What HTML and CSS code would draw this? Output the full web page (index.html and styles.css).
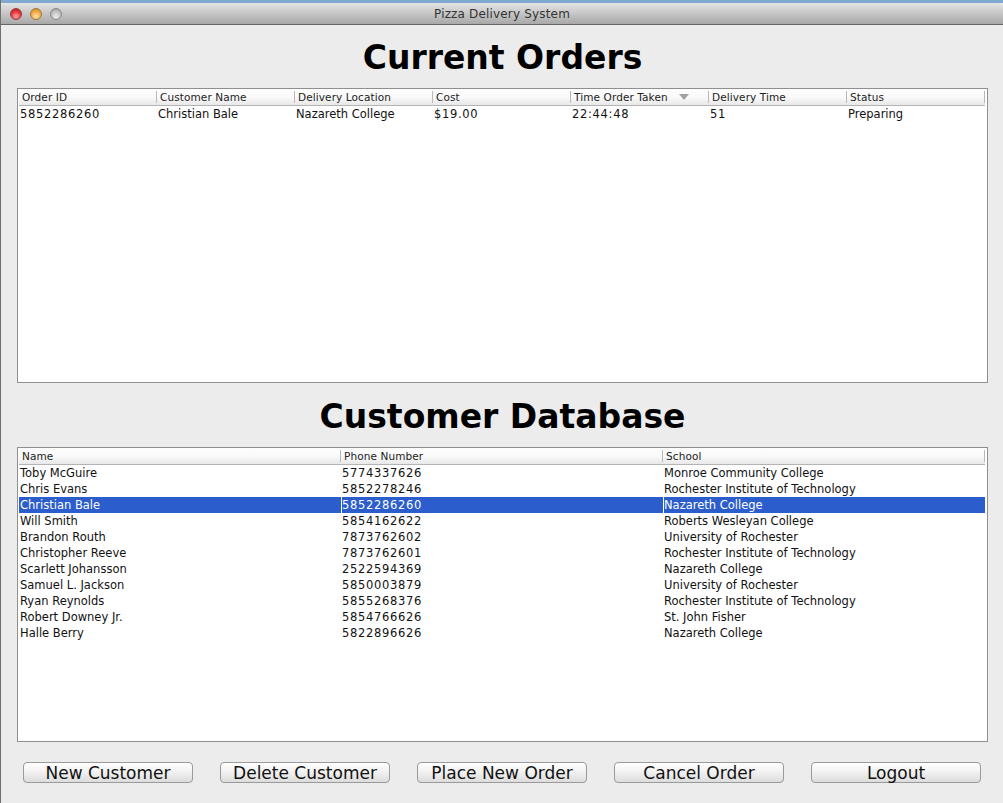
FILE: index.html
```html
<!DOCTYPE html>
<html lang="en">
<head>
<meta charset="utf-8">
<title>Pizza Delivery System</title>
<link rel="stylesheet" href="styles.css">
</head>
<body>
<div class="window">
  <header class="titlebar">
    <div class="lights">
      <span class="light red"></span>
      <span class="light amber"></span>
      <span class="light grey"></span>
    </div>
    <span class="title">Pizza Delivery System</span>
  </header>
  <main class="content">
    <h1 class="heading first">Current Orders</h1>
    <section class="table">
      <div class="row head cols7">
        <span class="hcell">Order ID</span>
        <span class="hcell">Customer Name</span>
        <span class="hcell">Delivery Location</span>
        <span class="hcell">Cost</span>
        <span class="hcell sorted">Time Order Taken<svg class="sort" width="10" height="6" viewBox="0 0 10 6"><path d="M0 0H10L5 6Z" fill="#a0a0a0"/></svg></span>
        <span class="hcell">Delivery Time</span>
        <span class="hcell">Status</span>
      </div>
      <div class="row cols7">
        <span class="cell num">5852286260</span>
        <span class="cell">Christian Bale</span>
        <span class="cell">Nazareth College</span>
        <span class="cell num">$19.00</span>
        <span class="cell num">22:44:48</span>
        <span class="cell num">51</span>
        <span class="cell">Preparing</span>
      </div>
    </section>
    <h1 class="heading second">Customer Database</h1>
    <section class="table">
      <div class="row head cols3">
        <span class="hcell">Name</span>
        <span class="hcell">Phone Number</span>
        <span class="hcell">School</span>
      </div>
      <div class="row cols3"><span class="cell">Toby McGuire</span><span class="cell num">5774337626</span><span class="cell">Monroe Community College</span></div>
      <div class="row cols3"><span class="cell">Chris Evans</span><span class="cell num">5852278246</span><span class="cell">Rochester Institute of Technology</span></div>
      <div class="row cols3 selected"><span class="cell">Christian Bale</span><span class="cell num">5852286260</span><span class="cell">Nazareth College</span></div>
      <div class="row cols3"><span class="cell">Will Smith</span><span class="cell num">5854162622</span><span class="cell">Roberts Wesleyan College</span></div>
      <div class="row cols3"><span class="cell">Brandon Routh</span><span class="cell num">7873762602</span><span class="cell">University of Rochester</span></div>
      <div class="row cols3"><span class="cell">Christopher Reeve</span><span class="cell num">7873762601</span><span class="cell">Rochester Institute of Technology</span></div>
      <div class="row cols3"><span class="cell">Scarlett Johansson</span><span class="cell num">2522594369</span><span class="cell">Nazareth College</span></div>
      <div class="row cols3"><span class="cell">Samuel L. Jackson</span><span class="cell num">5850003879</span><span class="cell">University of Rochester</span></div>
      <div class="row cols3"><span class="cell">Ryan Reynolds</span><span class="cell num">5855268376</span><span class="cell">Rochester Institute of Technology</span></div>
      <div class="row cols3"><span class="cell">Robert Downey Jr.</span><span class="cell num">5854766626</span><span class="cell">St. John Fisher</span></div>
      <div class="row cols3"><span class="cell">Halle Berry</span><span class="cell num">5822896626</span><span class="cell">Nazareth College</span></div>
    </section>
    <div class="buttons">
      <button class="btn">New Customer</button>
      <button class="btn">Delete Customer</button>
      <button class="btn">Place New Order</button>
      <button class="btn">Cancel Order</button>
      <button class="btn">Logout</button>
    </div>
  </main>
</div>
</body>
</html>
```
FILE: styles.css
```css
* { box-sizing: border-box; }
html, body { margin: 0; height: 100%; }
body {
  width: 1003px;
  height: 803px;
  overflow: hidden;
  background: #6f6f6f;
  padding: 3px 0 0 1px;
  font-family: "DejaVu Sans", sans-serif;
}
.window {
  height: 800px;
  background: #ececec;
  display: flex;
  flex-direction: column;
  box-shadow: 0 -3px 0 #7fa9cf;
}
.titlebar {
  height: 22px;
  flex: none;
  display: flex;
  align-items: center;
  justify-content: center;
  position: relative;
  background: linear-gradient(#e4e4e4, #a8a8a8);
  border-bottom: 1px solid #666;
  border-radius: 4px 4px 0 0;
}
.lights {
  position: absolute;
  left: 9px;
  top: 5px;
  display: flex;
  gap: 8px;
}
.light {
  width: 12px;
  height: 12px;
  border-radius: 50%;
  border: 1px solid #777;
}
.red { background: radial-gradient(circle at 50% 75%, #ffa0a0, #e0303a 60%, #b02228); border-color: #9a3a3a; }
.amber { background: radial-gradient(circle at 50% 75%, #ffe2a8, #eea540 60%, #c08428); border-color: #a0783a; }
.grey { background: radial-gradient(circle at 50% 75%, #ececec, #bcbcbc 60%, #989898); border-color: #8a8a8a; }
.title {
  font-size: 12px;
  letter-spacing: 0.17px;
  color: #333;
}
.content {
  flex: 1;
  padding: 0 15px 0 16px;
  display: flex;
  flex-direction: column;
}
.heading {
  margin: 0;
  text-align: center;
  font-size: 33px;
  font-weight: 700;
  color: #000;
}
.first { height: 63px; line-height: 66px; }
.second { height: 64px; line-height: 67px; }
.table {
  height: 295px;
  flex: none;
  background: #fff;
  border: 1px solid #8f8f8f;
  padding: 0 2px 0 1px;
}
.row {
  display: grid;
  height: 16px;
  align-items: center;
}
.cols7 { grid-template-columns: repeat(7, 138px); }
.cols3 { grid-template-columns: repeat(3, 322px); }
.head {
  height: 17px;
  background: linear-gradient(#fdfdfd, #fafafa 50%, #e8e8e8);
  border-bottom: 1px solid #b4b4b4;
  color: #222;
}
.hcell {
  font-size: 10.5px;
  letter-spacing: 0.1px;
  padding-left: 3px;
  height: 12px;
  line-height: 12px;
  border-right: 1px solid #b8b8b8;
  white-space: nowrap;
  display: flex;
  align-items: center;
}
.sort { margin-left: 11px; }
.cell {
  font-size: 11.5px;
  padding-left: 1px;
  line-height: 16px;
  height: 16px;
  color: #111;
  white-space: nowrap;
}
.num { letter-spacing: 0.69px; }
.selected { background: #2b5dcd; }
.selected .cell { color: #fff; border-left: 1px solid #fff; padding-left: 0; }
.selected .cell:first-child { border-left: 0; padding-left: 1px; }
.buttons {
  display: flex;
  gap: 27px;
  padding: 20px 0 0 6px;
}
.btn {
  width: 170px;
  height: 21px;
  padding: 1px 0 0;
  border: 1px solid #9a9a9a;
  border-radius: 4px;
  background: linear-gradient(#fff, #f2f2f2 45%, #dcdcdc);
  font-family: "DejaVu Sans", sans-serif;
  font-size: 17px;
  line-height: 19px;
  color: #111;
}
```
